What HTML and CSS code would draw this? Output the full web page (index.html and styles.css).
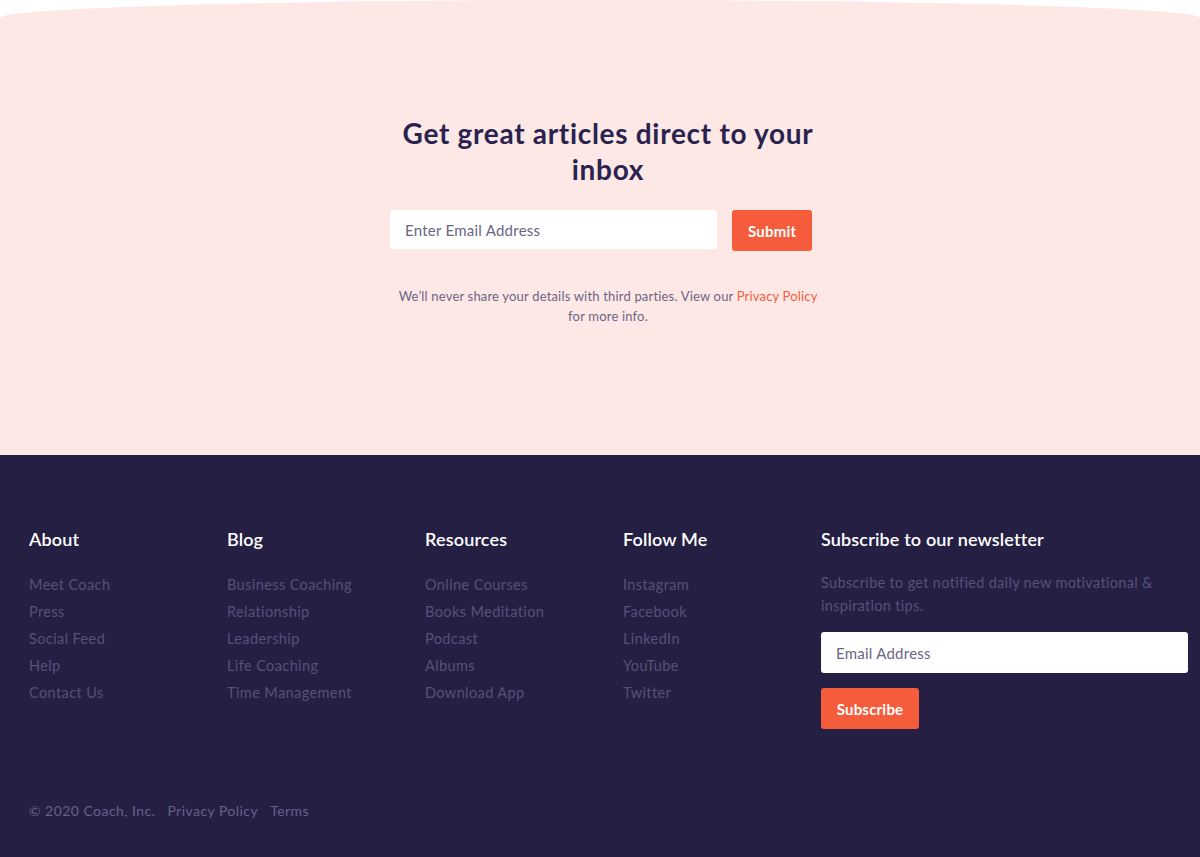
FILE: index.html
```html
<!DOCTYPE html>
<html lang="en">
<head>
<meta charset="utf-8">
<title>Coach newsletter</title>
<link rel="stylesheet" href="styles.css">
</head>
<body>
<section class="signup">
  <div class="signup-inner">
    <h2 class="signup-title">Get great articles direct to your inbox</h2>
    <form class="signup-form">
      <input class="signup-input" type="text" placeholder="Enter Email Address">
      <button class="btn" type="button">Submit</button>
    </form>
    <p class="signup-note">We’ll never share your details with third parties. View our <a href="#" class="accent">Privacy Policy</a> for more info.</p>
  </div>
</section>
<footer class="footer">
  <div class="footer-grid">
    <div class="col">
      <h3 class="col-title">About</h3>
      <ul class="links">
        <li><a href="#">Meet Coach</a></li>
        <li><a href="#">Press</a></li>
        <li><a href="#">Social Feed</a></li>
        <li><a href="#">Help</a></li>
        <li><a href="#">Contact Us</a></li>
      </ul>
    </div>
    <div class="col">
      <h3 class="col-title">Blog</h3>
      <ul class="links">
        <li><a href="#">Business Coaching</a></li>
        <li><a href="#">Relationship</a></li>
        <li><a href="#">Leadership</a></li>
        <li><a href="#">Life Coaching</a></li>
        <li><a href="#">Time Management</a></li>
      </ul>
    </div>
    <div class="col">
      <h3 class="col-title">Resources</h3>
      <ul class="links">
        <li><a href="#">Online Courses</a></li>
        <li><a href="#">Books Meditation</a></li>
        <li><a href="#">Podcast</a></li>
        <li><a href="#">Albums</a></li>
        <li><a href="#">Download App</a></li>
      </ul>
    </div>
    <div class="col">
      <h3 class="col-title">Follow Me</h3>
      <ul class="links">
        <li><a href="#">Instagram</a></li>
        <li><a href="#">Facebook</a></li>
        <li><a href="#">LinkedIn</a></li>
        <li><a href="#">YouTube</a></li>
        <li><a href="#">Twitter</a></li>
      </ul>
    </div>
    <div class="col col-news">
      <h3 class="col-title">Subscribe to our newsletter</h3>
      <p class="news-text">Subscribe to get notified daily new motivational &amp; inspiration tips.</p>
      <input class="news-input" type="text" placeholder="Email Address">
      <button class="btn btn-sub" type="button">Subscribe</button>
    </div>
  </div>
  <div class="footer-bottom">
    <span>© 2020 Coach, Inc.</span>
    <a href="#">Privacy Policy</a>
    <a href="#">Terms</a>
  </div>
</footer>
</body>
</html>
```

FILE: styles.css
```css
* { box-sizing: border-box; }
html, body { margin: 0; padding: 0; background: #ffffff; }
body {
  font-family: "Lato", "Open Sans", sans-serif;
  color: #2a2350;
}
a { text-decoration: none; color: inherit; }

.signup {
  background: #fde8e6;
  height: 455px;
  border-top-left-radius: 50% 18px;
  border-top-right-radius: 50% 18px;
  padding-top: 115px;
}
.signup-inner {
  width: 436px;
  margin: 0 auto;
  transform: translateX(8px);
  text-align: center;
}
.signup-title {
  margin: 0;
  font-size: 28px;
  line-height: 36px;
  font-weight: 700;
  letter-spacing: 0.7px;
  color: #2a2350;
}
.signup-form {
  display: flex;
  gap: 15px;
  margin: 23px 0 0;
  align-items: flex-start;
}
.signup-input {
  width: 327px;
  height: 39px;
  border: none;
  border-radius: 3px;
  background: #fff;
  padding: 0 15px;
  font-family: inherit;
  font-size: 15px;
  letter-spacing: 0.25px;
  color: #2a2350;
  outline: none;
}
.signup-input::placeholder { color: #6b6585; }
.btn {
  height: 41px;
  padding: 0 16px;
  border: none;
  border-radius: 3px;
  background: #f55c3b;
  color: #fff;
  font-family: inherit;
  font-size: 15px;
  font-weight: 700;
  letter-spacing: 0.2px;
  cursor: pointer;
}
.signup-note {
  margin: 35px 0 0;
  font-size: 13px;
  line-height: 20px;
  letter-spacing: 0.18px;
  color: #6b6585;
}
.accent { color: #f55c3b; }

.footer {
  background: #251f44;
  padding: 72px 12px 40px 29px;
  color: #57517a;
}
.footer-grid {
  display: grid;
  grid-template-columns: 198px 198px 198px 198px 1fr;
}
.col-title {
  margin: 0;
  font-size: 18px;
  line-height: 24px;
  font-weight: 600;
  letter-spacing: 0.15px;
  color: #ffffff;
}
.links {
  list-style: none;
  margin: 20px 0 0;
  padding: 0;
}
.links li {
  font-size: 14.5px;
  line-height: 27px;
  letter-spacing: 0.4px;
}
.news-text {
  margin: 20px 0 0;
  font-size: 14.5px;
  line-height: 23px;
  letter-spacing: 0.32px;
  max-width: 345px;
}
.news-input {
  display: block;
  width: 100%;
  height: 41px;
  margin-top: 15px;
  border: none;
  border-radius: 3px;
  background: #fff;
  padding: 0 15px;
  font-family: inherit;
  font-size: 15px;
  letter-spacing: 0.25px;
  outline: none;
}
.news-input::placeholder { color: #6b6585; }
.btn-sub {
  margin-top: 15px;
  width: 98px;
  padding: 0;
}
.footer-bottom {
  margin-top: 72px;
  display: flex;
  gap: 12px;
  font-size: 14px;
  line-height: 20px;
  letter-spacing: 0.45px;
  color: #67618a;
}
```
